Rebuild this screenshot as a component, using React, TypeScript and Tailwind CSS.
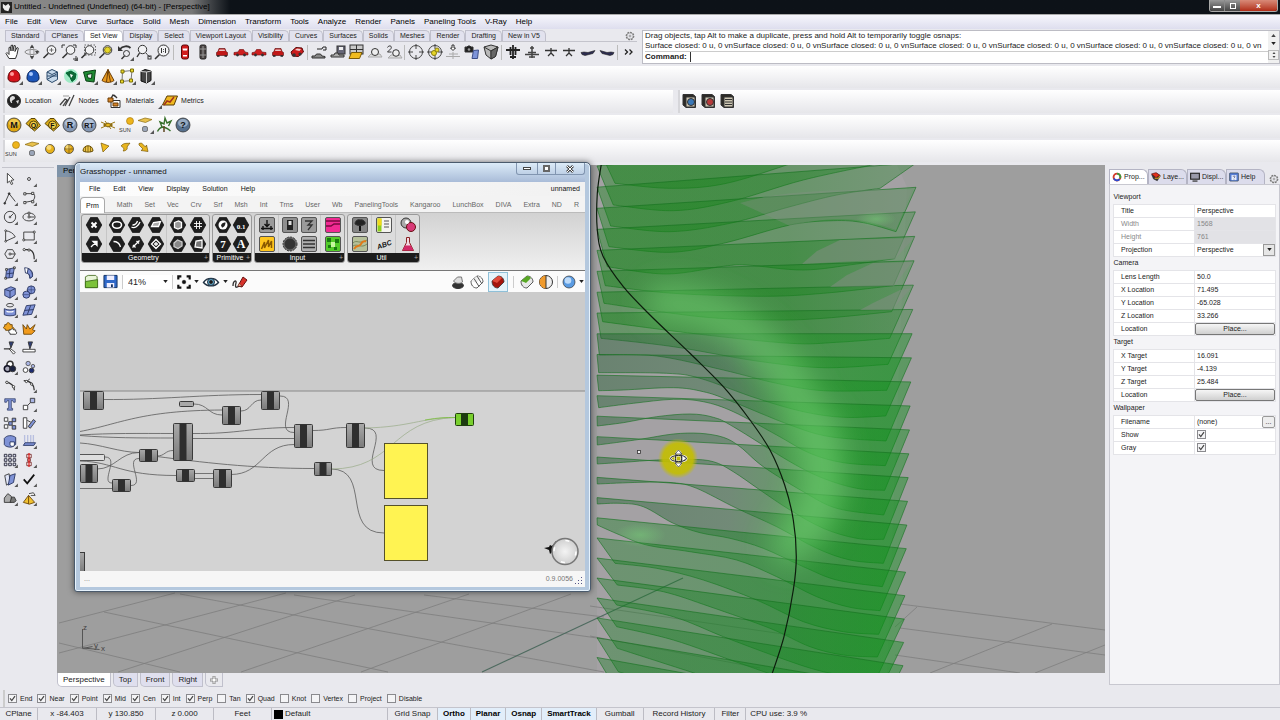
/**
 * Modelling workspace -- Rhino style shell with a floating Grasshopper window.
 *
 * The viewport and the node canvas are drawings, everything around them is plain markup.
 */

import { useState } from 'react';
import type { ReactNode } from 'react';

type Pt = [number, number];

interface Tool {
  name: string;
  art: ReactNode;
  fly?: boolean;
}

const MENUS = [
  'File', 'Edit', 'View', 'Curve', 'Surface', 'Solid', 'Mesh', 'Dimension', 'Transform', 'Tools',
  'Analyze', 'Render', 'Panels', 'Paneling Tools', 'V-Ray', 'Help',
];

const TOOL_TABS = [
  'Standard', 'CPlanes', 'Set View', 'Display', 'Select', 'Viewport Layout', 'Visibility', 'Curves',
  'Surfaces', 'Solids', 'Meshes', 'Render', 'Drafting', 'New in V5',
];

const GH_TABS = [
  'Prm', 'Math', 'Set', 'Vec', 'Crv', 'Srf', 'Msh', 'Int', 'Trns', 'User', 'Wb', 'PanelingTools',
  'Kangaroo', 'LunchBox', 'DIVA', 'Extra', 'ND', 'R',
];

/* ---------- small shared pieces ---------- */

function Art({ children, fly, className = 'size-4' }: { children: ReactNode; fly?: boolean; className?: string }) {
  return (
    <svg viewBox="0 0 16 16" className={`${className} block shrink-0 overflow-visible`} fill="none" stroke="#333" strokeWidth="1">
      {children}
      {fly && <path d="M13 17h4v-4z" fill="#555" stroke="none" />}
    </svg>
  );
}

function ToolButton({ tool }: { tool: Tool }) {
  return (
    <button aria-label={tool.name} className="flex size-4 shrink-0 items-center justify-center">
      <Art fly={tool.fly}>{tool.art}</Art>
    </button>
  );
}

function Gear() {
  return (
    <Art className="size-[10px]">
      <circle cx="8" cy="8" r="6" stroke="#777" strokeWidth="2" strokeDasharray="3 1.6" />
      <circle cx="8" cy="8" r="5" stroke="#888" />
      <circle cx="8" cy="8" r="1.5" stroke="#777" />
    </Art>
  );
}

function CheckBox({ id, checked }: { id: string; checked: boolean }) {
  return (
    <span className="relative block size-[9px]">
      <input
        id={id}
        type="checkbox"
        defaultChecked={checked}
        className="peer block size-[9px] appearance-none border border-[#8a8a8e] bg-[#f4f4f6]"
      />
      <svg viewBox="0 0 9 9" className="pointer-events-none absolute inset-0 hidden size-[9px] peer-checked:block">
        <path d="M2 4.4 3.8 6.6 7 2.2" fill="none" stroke="#444" strokeWidth="1.2" />
      </svg>
    </span>
  );
}

/* ---------- icon art ---------- */

const ball = (light: string, dark: string, r = 5.5) => (
  <>
    <circle cx="8" cy="8" r={r} fill={dark} stroke="#333" strokeWidth="0.7" />
    <circle cx="7" cy="6.5" r={r * 0.55} fill={light} stroke="none" opacity="0.8" />
  </>
);

const badge = (text: string, light: string, dark: string) => (
  <>
    <circle cx="8" cy="8" r="7" fill={dark} stroke="#333" strokeWidth="0.8" />
    <ellipse cx="8" cy="6" rx="5" ry="4" fill={light} stroke="none" opacity="0.7" />
    <text x="8" y="11.2" textAnchor="middle" fontSize={text.length > 1 ? 7 : 9} fontWeight="700" fill="#111" stroke="none">{text}</text>
  </>
);

const tag = (text: string) => (
  <>
    <path d="M1 6.5 6 1.5h4l5.5 7L9.500 14z" fill="#dcae18" stroke="#5a4508" />
    <circle cx="8.500" cy="8" r="4" fill="#f3cf45" stroke="#5a4508" />
    <text x="8.500" y="10.700" textAnchor="middle" fontSize="7" fontWeight="700" fill="#111" stroke="none">{text}</text>
  </>
);

const sunArt = (
  <>
    <circle cx="11" cy="4" r="3.500" fill="#eeb51c" stroke="#a07008" strokeWidth="0.6" />
    <text x="0" y="14.500" fontSize="5.500" fill="#333" stroke="none">SUN</text>
  </>
);

const planeLight = (
  <>
    <path d="M1 3.500 8 1l7 1.500L8.500 5.500z" fill="#e8c14c" stroke="#8a6a10" strokeWidth="0.7" />
    <rect x="5.500" y="9.500" width="5" height="5" rx="1.500" fill="#9aa5b8" stroke="#555" strokeWidth="0.7" />
  </>
);

const lens = <><circle cx="9.500" cy="6" r="4.300" fill="#f2f2f4" stroke="#333" /><path d="M6.400 9.200 1.500 14" stroke="#333" strokeWidth="1.600" /></>;

const carFront = (
  <>
    <path d="M4 7.500 5 4.500h6l1 3 1.500 1v3h-11v-3z" fill="#c01818" stroke="#5a0808" strokeWidth="0.6" />
    <path d="M5.500 5.500h5l.5 1.500H5z" fill="#e8c8c8" stroke="none" />
    <path d="M3 12h2.500M10.500 12H13" stroke="#222" strokeWidth="1.500" />
  </>
);

const carSide = (
  <>
    <path d="M1 11V8.500L5 8l1.500-2.500h4L12 8l3 .700V11z" fill="#d02020" stroke="#6a0a0a" strokeWidth="0.6" />
    <circle cx="4.500" cy="11" r="1.400" fill="#333" stroke="none" />
    <circle cx="11.500" cy="11" r="1.400" fill="#333" stroke="none" />
  </>
);

const target = <><circle cx="8" cy="8" r="6.500" stroke="#444" /><path d="M8 0v5M8 11v5M0 8h5M11 8h5" stroke="#444" /></>;
const planeSmall = <><path d="M2 6.500h12M8 4v5M8 9l-3 3M8 9l3 3" stroke="#333" strokeWidth="1.300" /></>;
const planeSide = <path d="M1 8.500 4 8l4 .5 7-2-2 3-8 2-3-1z" fill="#2c2c50" stroke="#222" strokeWidth="0.6" />;

const SET_VIEW: (Tool | null)[] = [
  { name: 'Pan', art: <path d="M4 14.500 1 9.500l1-1 2 2V3.500l1.400-.5.600 4V1.500L7.500 1 8 7l1-5.500 1.400.3L10 7.500l2-4 1.300.7L12 10.500l-1.500 4z" fill="#fff" stroke="#333" /> },
  { name: 'Rotate', art: <><ellipse cx="8" cy="8" rx="7" ry="2.500" stroke="#888" /><ellipse cx="8" cy="8" rx="2" ry="6.500" stroke="#999" /><path d="m6 12 2 3.500 2-3.500zM6 4l2-3.500L10 4zM11 7h4l-2 3z" fill="#444" stroke="none" /></> },
  { name: 'Zoom', art: <>{lens}<path d="M7.500 6h4M9.500 4v4" stroke="#555" strokeWidth="0.8" /></> },
  { name: 'Zoom Extents', art: <>{lens}<path d="M1 4V1h3M12 1h3v3M15 12v3h-3" /></>, fly: true },
  { name: 'Zoom Window', art: <>{lens}<rect x="4.500" y="1" width="11" height="10" stroke="#666" strokeDasharray="1.500 1.500" /></> },
  { name: 'Zoom Selected', art: <>{lens}<circle cx="9.500" cy="6" r="3" fill="#e6d628" stroke="#8a7e10" /></> },
  { name: 'Undo View', art: <><path d="M2.500 5.500C6 1.500 11 1.500 13.500 4" strokeWidth="1.800" /><path d="M1 2v5h5z" fill="#333" stroke="none" /><circle cx="9.500" cy="9.500" r="3" /><path d="m7.500 12-3 3" strokeWidth="1.400" /></>, fly: true },
  { name: 'Zoom Dynamic', art: <><circle cx="6.500" cy="5.500" r="4.200" fill="#f2f2f4" /><path d="M3.500 9 1 13" strokeWidth="1.400" /><path d="M10 9c1 2 2 2 4 4" /><rect x="12" y="12" width="3" height="3" /></> },
  { name: 'Zoom 1:1', art: <><circle cx="9.500" cy="6.500" r="5.500" fill="#f2f2f4" /><path d="M5.500 10.500 1 15" strokeWidth="1.600" /><path d="M7.500 4v5M11.500 4v5M9.500 5.200v.8M9.500 7.200V8" /></> },
  null,
  { name: 'Top', art: <><rect x="4.500" y="1" width="7" height="14" rx="2" fill="#d11c1c" stroke="#5a0808" /><path d="M5.500 4.500h5l-.5 2H6zM6 11h4v1.500H6z" fill="#fff" stroke="none" /></> },
  { name: 'Bottom', art: <><rect x="5" y="1" width="6" height="14" rx="1.500" fill="#4a4444" stroke="#222" /><path d="M8 2v12M5 5h6M5 11h6" stroke="#999" /></> },
  { name: 'Front', art: carFront },
  { name: 'Left', art: carSide },
  { name: 'Right', art: <g transform="matrix(-1 0 0 1 16 0)">{carSide}</g> },
  { name: 'Back', art: carFront },
  { name: 'Perspective', art: <><path d="m2 8 5-4.500 6 .5 1.500 4-5 4.500-6-.5z" fill="#cc1c1c" stroke="#5a0808" /><path d="m6 6 2-1.500 4 .5-1.500 2z" fill="#f0d0d0" stroke="none" /><circle cx="5" cy="11" r="1.800" fill="#333" stroke="none" /><circle cx="11" cy="10" r="1.600" fill="#333" stroke="none" /></> },
  null,
  { name: 'Walk', art: <><path d="M1 14v-2h3l1.500-2h4l1.500 2 3 .5V14z" fill="#888" /><path d="M6 5h5l1-2h3v3h-3" stroke="#222" /></> },
  { name: 'Named Views', art: <><rect x="7" y="2" width="8" height="8" fill="#667" /><path d="M9 3h4v3H9z" fill="#eee" stroke="none" /><path d="M1 13v-2h3l1-2h3l1 2h5v2z" fill="#aaa" /></> },
  { name: 'Viewports', art: <><rect x="2" y="1" width="13" height="9" fill="#c9c9c9" /><path d="M8.500 1v9M2 5.500h13" /><path d="m1 14.500 2.500-6H14l-2.500 6z" fill="#f0bb20" stroke="#7a5a08" /></> },
  { name: 'Camera', art: <><path d="M1 13 4 10h9l2 3z" fill="#ddd" stroke="#aaa" /><circle cx="8" cy="8" r="3.500" fill="#eee" /></> },
  { name: 'Two Point', art: <><path d="M2 14 5 11h9l2 3z" fill="#ddd" stroke="#aaa" /><circle cx="10" cy="9" r="3.300" fill="#eee" /><path d="M1.500 3.500c1-2.500 5-2 3.500 1L1.500 8h4" /></> },
  null,
  { name: 'Target', art: target },
  { name: 'Target Object', art: <>{target}<circle cx="7" cy="9" r="2.500" fill="#e6d628" stroke="#8a7e10" /><circle cx="10" cy="6" r="2" fill="#e6d628" stroke="#8a7e10" /></> },
  { name: 'Drop Target', art: <><path d="M7 1h2v3h1.500L8 6.500 5.500 4H7z" fill="#fff" /><path d="M1 12.500h14M4 10h9M8 8v7" stroke="#aaa" /></> },
  { name: 'Snapshot', art: <><path d="M1 3h2l1-1h2l1 1h2v5H1z" fill="#222" /><circle cx="5" cy="5.500" r="1.300" fill="#999" stroke="none" /><path d="m8 14.500 1.500-8 5-.5-1 8.500z" fill="#7d93d8" stroke="#3b4d88" /></> },
  { name: 'Box', art: <><path d="M1 3 8 1l7 2-2.500 9.500L8 15l-5-4z" fill="#b9b9b9" stroke="#333" /><path d="m1 3 7 4 7-4M8 7v8" /><path d="m8 7 7-4-2.500 9.500L8 15z" fill="#666" /></> },
  null,
  { name: 'Plane Top', art: <><path d="M8 1v14M1 6h14M5.500 3v8M10.500 3v8M5 13h6" stroke="#222" strokeWidth="1.800" /></> },
  { name: 'Plane Bottom', art: <><path d="M1 10.500h14M8 2v12M4 8.500h8M6 4h4M5 13h6" stroke="#444" strokeWidth="1.500" /></> },
  { name: 'Plane Front', art: planeSmall },
  { name: 'Plane Back', art: planeSmall },
  { name: 'Plane Left', art: planeSide },
  { name: 'Plane Right', art: <g transform="matrix(-1 0 0 1 16 0)">{planeSide}</g> },
  null,
  { name: 'More', art: <path d="m4 5.500 2.500 2.500L4 10.500M8.500 5.500 11 8l-2.500 2.500" stroke="#222" strokeWidth="1.300" /> },
];

const SHAPES: Tool[] = [
  { name: 'Red Solid', art: <><path d="M2 10C2 5 5 2 8 2s6 3 6 8c0 3-3 4-6 4s-6-1-6-4z" fill="#d3141c" stroke="#5c0606" /><circle cx="6" cy="6" r="2" fill="#ff9a9a" stroke="none" /></>, fly: true },
  { name: 'Blue Solid', art: <><path d="M2 10C2 5 5 2 8 2s6 3 6 8c0 3-3 4-6 4s-6-1-6-4z" fill="#1c55b8" stroke="#0a2358" /><circle cx="6" cy="6" r="2" fill="#a8c8ff" stroke="none" /></>, fly: true },
  { name: 'Cage', art: <><path d="m3 4 5-2.500L13.500 4v7.500L8 14.500l-5-3z" fill="#c6d8ea" stroke="#2c4b6c" /><path d="m3 11.500 10.500-6M3 8h10.500M3 4l5 2.500L13.500 4" stroke="#2c4b6c" /></>, fly: true },
  { name: 'Glow', art: <><circle cx="8" cy="8" r="7" fill="#7fe8b4" stroke="none" opacity="0.7" /><path d="m3 5 5-2 5 3-1 5-3 2.500-2-4z" fill="#0f6a36" stroke="#063" /><path d="m7 6 3 1-2 3z" fill="#fff" stroke="none" /></>, fly: true },
  { name: 'Frame', art: <><path d="m2.500 4 12-2-1.500 12-8-1z" fill="#1f8a34" stroke="#0a4015" /><path d="m6 6.500 5-1-.5 5-3.500-.5z" fill="#e9e9ec" stroke="#0a4015" /></>, fly: true },
  { name: 'Cone', art: <><path d="m8 1.500 6 11c-3 2.500-9 2.500-12 0z" fill="#e79a20" stroke="#6a3c05" /><path d="M8 1.500 6.500 14M8 1.500 10.500 14" stroke="#6a3c05" /></>, fly: true },
  { name: 'Points', art: <><path d="M3.500 3.500 13 2.500l-1 10-9 1z" stroke="#777" /><path d="M2 2h3v3H2zM11.500 1h3v3h-3zM10.500 11h3v3h-3zM1.500 12h3v3h-3z" fill="#ecd92c" stroke="#7d7008" /></>, fly: true },
  { name: 'Box Split', art: <><path d="m3 3.500 4-2 6 1.500v9.500l-4.500 2.500-5.500-2z" fill="#444" stroke="#111" /><path d="M8.500 4v11M3 3.500 8.500 4 13 3" stroke="#ccc" /></>, fly: true },
];

const VRAY: Tool[] = [
  { name: 'Material Editor', art: badge('M', '#f6d867', '#dda512') },
  { name: 'Options', art: tag('O') },
  { name: 'Frame Buffer', art: tag('F') },
  { name: 'Render', art: badge('R', '#c6d4e8', '#8497b4') },
  { name: 'Render RT', art: badge('RT', '#c6d4e8', '#8497b4') },
  { name: 'Net', art: <><path d="m1 5 14 6M1 11l14-6M3 8h10M5 4l6 8" stroke="#9b7812" /><path d="m4 8 4-2 4 2-4 2z" fill="#e6b822" stroke="#7a5a08" /></> },
  { name: 'Sun', art: sunArt },
  { name: 'Plane Light', art: planeLight, fly: true },
  { name: 'Proxy', art: <><path d="M1.500 14.500C4 9 9 9 14.500 14M6 10 4 5l4 2 1-6 2 5 4-2-2.500 5" stroke="#38702c" strokeWidth="1.400" /><path d="M8 9v6" stroke="#5c4420" strokeWidth="1.500" /></> },
  { name: 'Help', art: badge('?', '#b4c4d8', '#56708e') },
];

const LIGHTS: Tool[] = [
  { name: 'Sun Light', art: sunArt },
  { name: 'Rectangular Light', art: planeLight },
  { name: 'Omni Light', art: ball('#fbe48c', '#e8b21a', 4.5) },
  { name: 'Sphere Light', art: <>{ball('#fbe48c', '#e0a818', 4.5)}<path d="M4 8h8M8 4v8" stroke="#7a5a08" strokeWidth="0.7" /></> },
  { name: 'Dome Light', art: <><path d="M3 10c0-7 10-7 10 0-2 1.500-8 1.500-10 0z" fill="#ecc448" stroke="#6a5008" /><path d="M8 5v6M5.500 6v5M10.500 6v5" stroke="#6a5008" strokeWidth="0.7" /></> },
  { name: 'Spot Light', art: <path d="m2 2 8 3-6 6z" fill="#eebb20" stroke="#7a5a08" strokeWidth="0.7" /> },
  { name: 'IES Light', art: <><path d="M4 5c3-4 7-2 9-3l-3 4c1 2-1 4-4 4 2-2 0-4-2-5z" fill="#e8b520" stroke="#7a5a08" strokeWidth="0.7" /></> },
  { name: 'Direct Light', art: <path d="M3 2.500 5.500 2l4 4 1-2 1.500 6.500-7-1 2-1.500-4-4z" fill="#e8b520" stroke="#7a5a08" strokeWidth="0.7" /> },
];

const blue = '#7f92d6';
const cubeArt = <><path d="m2 5 7-3 5 2v7l-6 4-6-3z" fill={blue} stroke="#27345f" /><path d="m2 5 6 2 6-3M8 7v8" stroke="#27345f" /></>;

const PALETTE: Tool[] = [
  { name: 'Select', art: <path d="M5 1.500v11l2.500-2.200 2 4 1.700-.8-2-4L12.500 9z" fill="#fff" /> },
  { name: 'Point', art: <circle cx="8" cy="8" r="1.700" />, fly: true },
  { name: 'Polyline', art: <><path d="M2 14 7 3l7 9" /><circle cx="2" cy="14" r="1" fill="#333" /><circle cx="7" cy="3" r="1" fill="#333" /></>, fly: true },
  { name: 'Curve', art: <><path d="M3 3h9c4 0 3 8-1 8.500L3 13" /><path d="M2 2h2.500v2.500H2zM11 1.500h2.500V4H11zM2 12h2.500v2.500H2zM11 11h2.500v2.500H11z" fill="#fff" /></>, fly: true },
  { name: 'Circle', art: <><circle cx="8" cy="8" r="6.500" /><path d="m8 8 4-4" /><circle cx="8" cy="8" r="1" fill="#fff" /></>, fly: true },
  { name: 'Ellipse', art: <><ellipse cx="8" cy="8" rx="7" ry="4.500" /><path d="M8 8V3.500M8 8h6" /><circle cx="8" cy="8" r="1.200" fill="#fff" /><circle cx="8" cy="3.500" r="1.200" fill="#fff" /></>, fly: true },
  { name: 'Arc', art: <><path d="M3 2v12l11-5C12 5 8 2.500 3 2z" /><circle cx="3" cy="2" r="1" fill="#fff" /><circle cx="3" cy="14" r="1" fill="#fff" /></>, fly: true },
  { name: 'Rectangle', art: <><path d="M2 3.500h12v9H2z" /><circle cx="2" cy="12.500" r="1.200" fill="#fff" /><circle cx="14" cy="3.500" r="1.200" fill="#fff" /></>, fly: true },
  { name: 'Polygon', art: <><path d="m5 3 6 0 3 5-3 5H5L2 8z" /><path d="M8 8h6" /><circle cx="8" cy="8" r="1.200" fill="#fff" /></>, fly: true },
  { name: 'Fillet', art: <><path d="M2 3h5c5 0 7 4 7 11" strokeWidth="1.400" /><circle cx="2.500" cy="3" r="1.300" fill="#fff" /><circle cx="8" cy="3.500" r="1.300" fill="#fff" /></>, fly: true },
  { name: 'Surface', art: <><path d="m4 4 9-2-2 11-8 1z" fill={blue} stroke="#27345f" /><path d="M3 3h2v2H3zM12 1h2v2h-2zM2 13h2v2H2z" fill="#fff" /><path d="M8 3 7 13.500M4 9l8-1" stroke="#27345f" /></>, fly: true },
  { name: 'Loft', art: <><path d="M3 2c6 0 10 4 9 10l-3 2c0-4-2-6-5-6z" fill="#fff" stroke="#27345f" /><path d="M7 3c4 2 5 5 5 9l-3 2c0-4-1-5-3-6z" fill={blue} stroke="#27345f" /></>, fly: true },
  { name: 'Box', art: cubeArt, fly: true },
  { name: 'Spheres', art: <><circle cx="10.500" cy="5.500" r="4.500" fill={blue} stroke="#27345f" /><circle cx="5" cy="11" r="4" fill={blue} stroke="#27345f" /><path d="M6 5.500h9M1 11h8M10.500 1v9" stroke="#27345f" strokeWidth="0.6" /></>, fly: true },
  { name: 'Pipe', art: <><ellipse cx="8" cy="2.500" rx="4" ry="2" /><path d="M1.500 6.500c4 2 9 2 13 0v7c-4 1.500-9 1.500-13 0z" fill={blue} stroke="#27345f" /><path d="M4 9.500c3 1 5 1 8 0" stroke="#fff" strokeWidth="1.500" /></>, fly: true },
  { name: 'Patch', art: <><path d="m5 3 10-1-4 11-10 1z" fill={blue} stroke="#27345f" /><path d="m10 2.500-4 11M3 8.500l10-1" stroke="#27345f" /></>, fly: true },
  { name: 'Join', art: <><path d="M2 3h2c0-3 4-3 4 0h2.500v3c3 0 3 3.500 0 3.500H3V8C0 8 0 5 2 5z" fill="#f0a422" stroke="#6a4508" /><path d="M7 9h2c0-2 3-2 3 0h2.500v2c2 0 1 3 0 3H8v-1.500c-2 0-2-2-1-2z" fill="#fff" /></> },
  { name: 'Explode', art: <path d="M2 14 1 3l4 5 1-5 3 5 6-5-3 6 3 1-4 4z" fill="#f19a1c" stroke="#6a4508" /> },
  { name: 'Trim', art: <><path d="M1 9h8" strokeWidth="1.400" /><path d="M7 1h5L9 8z" fill="#2f3f78" /><path d="m9 9 5 4-2 2-5-6z" fill="#fff" /></> },
  { name: 'Split', art: <><path d="M1 9.500h14v3H1z" fill="#fff" /><path d="M7 1h5L9 9z" fill="#2f3f78" /></> },
  { name: 'Group', art: <><circle cx="8" cy="5" r="3.500" fill="#fff" strokeWidth="1.800" /><circle cx="5" cy="10" r="3.500" fill="#aab" stroke="#112" strokeWidth="1.800" /><circle cx="11" cy="10" r="3.500" fill="#1c2340" /></>, fly: true },
  { name: 'Ungroup', art: <><circle cx="7" cy="4" r="2.500" fill="#a9b4e4" stroke="#555" /><circle cx="12.500" cy="7" r="2" fill="#a9b4e4" stroke="#555" /><circle cx="4" cy="11.500" r="2.700" fill="#fff" /><circle cx="11" cy="12" r="2.700" fill="#1c2a70" /></> },
  { name: 'Edit Points', art: <><path d="M3 5c6 0 10 4 10 9" strokeWidth="1.500" /><circle cx="4.500" cy="5" r="1.400" fill="#fff" /><circle cx="12" cy="10" r="1.400" fill="#fff" /></> },
  { name: 'Extend', art: <><path d="M2 3c8 0 12 5 12 11" strokeWidth="1.500" /><path d="m5 4 4-3" /><circle cx="5" cy="4" r="1.300" fill="#fff" /><circle cx="11" cy="7" r="1.300" fill="#fff" /></>, fly: true },
  { name: 'Text', art: <path d="M2 2h12v4h-2l-1-2H9.500v9H11v2H5v-2h1.500V4H5L4 6H2z" fill={blue} stroke="#27345f" strokeWidth="0.8" /> },
  { name: 'Move', art: <><path d="M1.500 9.500h5v5h-5z" fill="#fff" /><path d="M9.500 1.500h5v5h-5z" fill="#a9b4e4" /><path d="m6.500 9.500 3-3" /></>, fly: true },
  { name: 'Array', art: <><path d="M1.500 2h4v4h-4zM1.500 10h4v4h-4z" fill="#fff" /><path d="M6.500 6.500h4v4h-4zM10.500 2.500h4v4h-4zM10.500 11h4v4h-4z" fill={blue} /></> },
  { name: 'Orient', art: <><path d="M1.500 2h4v12h-4z" fill="#fff" /><path d="m7 12 6-8 2.500 2-6 8z" fill={blue} /><path d="m6 5 4 2" /></> },
  { name: 'Solid Edit', art: <><path d="M1.500 5c3-4 9-4 13-1v8c-2 2-4 3-6 3-4 0-7-2-7-3z" fill={blue} stroke="#27345f" /><path d="M8 9h5v4c-2 2-5 1-5-1z" fill="#fff" stroke="#27345f" /></>, fly: true },
  { name: 'Project', art: <><path d="M3 1v9M6.500 1v9M10 1v9M13 1v9" stroke="#b8bfe0" strokeWidth="1.500" /><path d="m1.500 13 2-3h12l-2 3z" fill={blue} stroke="#27345f" /></>, fly: true },
  { name: 'Grid', art: <path d="M1.500 1.500h3v3h-3zM6.500 1.500h3v3h-3zM11.500 1.500h3v3h-3zM1.500 6.500h3v3h-3zM6.500 6.500h3v3h-3zM11.500 6.500h3v3h-3zM1.500 11.500h3v3h-3zM6.500 11.500h3v3h-3zM11.500 11.500h3v3h-3z" fill="#dfe2f2" stroke="#223" />, fly: true },
  { name: 'Align', art: <><path d="M5.500 1.500h5v4h-5zM6.500 6.500h3v3h-3zM5.500 10.500h5v4h-5z" fill="#fff" stroke="#722" /><path d="M8 0v16" stroke="#d22" strokeWidth="1.500" /></>, fly: true },
  { name: 'Analyze', art: <><path d="m2 4 5-2 1 10-4 3z" fill="#dfe4f8" /><path d="m8 4 6-2-2 10-6 3z" fill={blue} stroke="#27345f" /></>, fly: true },
  { name: 'Check', art: <path d="m2 8.500 4 4.500L14 3" stroke="#111" strokeWidth="2" />, fly: true },
  { name: 'Render', art: <><path d="M1.500 13V8l4-5 4 3v7z" fill="#aaa" /><path d="m8 13 2-6h3l2 4-2 2z" fill="#777" /></>, fly: true },
  { name: 'Spotlight', art: <><path d="m1.500 13 6-8 7 8-6 2z" fill="#f0c030" stroke="#6a4508" /><path d="M7.500 5v10" stroke="#6a4508" /><path d="m8 3 5-1 2 3h-5" fill="#fff" /></>, fly: true },
];

/* ---------- viewport drawing ---------- */

// smooth line through a list of points
function spline(pts: Pt[]) {
  let d = '';
  for (let i = 0; i < pts.length - 1; i++) {
    const p0 = pts[i - 1] ?? pts[i];
    const p1 = pts[i];
    const p2 = pts[i + 1];
    const p3 = pts[i + 2] ?? p2;
    const c1 = [p1[0] + (p2[0] - p0[0]) / 6, p1[1] + (p2[1] - p0[1]) / 6];
    const c2 = [p2[0] - (p3[0] - p1[0]) / 6, p2[1] - (p3[1] - p1[1]) / 6];
    d += `C${c1.map((n) => n.toFixed(1))} ${c2.map((n) => n.toFixed(1))} ${p2[0].toFixed(1)},${p2[1].toFixed(1)}`;
  }
  return d;
}

// lower edge of every fin, left to right, in thirds of a unit from (590,160)
const FIN_EDGES: Pt[][] = [
  [[75, 70], [240, 85], [400, 72], [590, 15], [800, -60]],
  [[70, 135], [250, 152], [420, 125], [640, 60], [870, 10]],
  [[62, 198], [240, 215], [420, 190], [600, 140], [740, 105], [870, 85]],
  [[57, 260], [240, 277], [400, 250], [600, 195], [730, 182], [820, 188], [918, 215]],
  [[52, 320], [230, 342], [400, 319], [470, 315], [640, 330], [800, 312], [914, 296]],
  [[46, 377], [250, 400], [520, 409], [700, 400], [910, 377]],
  [[42, 430], [330, 470], [540, 480], [700, 475], [905, 455]],
  [[38, 485], [330, 523], [600, 550], [740, 547], [899, 535]],
  [[33, 535], [250, 560], [500, 603], [700, 623], [894, 613]],
  [[28, 585], [200, 588], [400, 630], [560, 670], [700, 692], [890, 691]],
  [[26, 638], [230, 640], [330, 655], [500, 715], [640, 755], [760, 772], [887, 768]],
  [[26, 692], [100, 690], [250, 683], [340, 695], [420, 722], [600, 795], [720, 830], [888, 843]],
  [[26, 743], [130, 730], [250, 718], [340, 725], [430, 755], [560, 825], [660, 880], [760, 908], [886, 917]],
  [[22, 798], [100, 788], [200, 770], [300, 762], [370, 772], [430, 800], [600, 905], [700, 955], [800, 985], [884, 991]],
  [[22, 855], [150, 838], [250, 822], [330, 820], [400, 832], [450, 860], [520, 920], [640, 995], [740, 1045], [881, 1065]],
  [[22, 912], [100, 907], [200, 900], [300, 898], [370, 905], [430, 935], [510, 990], [600, 1050], [700, 1105], [800, 1135], [881, 1138]],
  [[22, 972], [150, 967], [250, 968], [320, 985], [440, 1045], [560, 1100], [680, 1165], [780, 1200], [880, 1210]],
  [[22, 1032], [90, 1030], [160, 1040], [250, 1090], [330, 1118], [420, 1135], [520, 1165], [640, 1220], [740, 1260], [877, 1280]],
  [[22, 1095], [90, 1125], [170, 1155], [300, 1175], [440, 1200], [560, 1250], [680, 1310], [780, 1342], [870, 1352]],
  [[75, 1210], [200, 1225], [340, 1260], [500, 1320], [640, 1385], [760, 1415], [866, 1423]],
  [[82, 1275], [220, 1295], [360, 1340], [540, 1405], [660, 1460], [760, 1485], [862, 1491]],
  [[80, 1335], [250, 1370], [400, 1430], [560, 1490], [700, 1535], [857, 1560]],
  [[80, 1400], [250, 1440], [450, 1510], [600, 1560], [853, 1628]],
  [[82, 1465], [300, 1535], [500, 1600], [850, 1696]],
  [[85, 1535], [300, 1600], [850, 1760]],
  [[85, 1600], [300, 1680], [850, 1830]],
];

const toView = ([x, y]: Pt): Pt => [590 + x / 3, 160 + y / 3];

const FINS = FIN_EDGES.map((edge, i) => {
  const k = i - 3;
  const left: Pt = [597, 208.3 + 21.1 * k - 0.031 * k * k];
  const right: Pt = [916 - 0.65 * k, 187.3 + 24.6 * k - 0.034 * k * k];
  const low = edge.map(toView).reverse();
  return `M${left}L${right}L${low[0]}${spline(low)}Z`;
});

const RAIL: Pt[] = [
  [36, 0], [22, 100], [22, 210], [40, 290], [100, 380], [180, 465], [300, 580], [400, 680], [480, 780],
  [540, 870], [584, 975], [610, 1080], [619, 1190], [610, 1290], [582, 1430], [545, 1545],
];

const FLOOR = [
  'M59 623 175 593', 'M59 653 286 593', 'M118 672 355 595', 'M241 672 469 594', 'M361 672 571 594',
  'M59 643 180 672', 'M104 612 388 672', 'M180 594 604 672', 'M294 595 604 639', 'M424 595 604 617',
  'M900 604 1105 630', 'M900 628 1105 655', 'M895 655 1020 673', 'M895 627 917 607', 'M930 673 1052 624', 'M1035 673 1105 645',
  'M590 606 790 635', 'M590 636 760 668',
];

function Scene() {
  return (
    <svg viewBox="57 165 1048 508" preserveAspectRatio="xMinYMin slice" className="absolute inset-0 h-full w-full">
      <defs>
        <linearGradient id="finTop" gradientUnits="userSpaceOnUse" x1="597" y1="0" x2="916" y2="0">
          <stop offset="0" stopColor="#168319" stopOpacity="0.42" />
          <stop offset="0.6" stopColor="#16831a" stopOpacity="0.42" />
          <stop offset="1" stopColor="#23862a" stopOpacity="0.34" />
        </linearGradient>
        <linearGradient id="finMid" gradientUnits="userSpaceOnUse" x1="597" y1="0" x2="910" y2="0">
          <stop offset="0" stopColor="#265f34" stopOpacity="0.46" />
          <stop offset="0.42" stopColor="#2c6a3a" stopOpacity="0.42" />
          <stop offset="0.62" stopColor="#18901f" stopOpacity="0.42" />
          <stop offset="1" stopColor="#0b9018" stopOpacity="0.44" />
        </linearGradient>
        <linearGradient id="finLow" gradientUnits="userSpaceOnUse" x1="597" y1="0" x2="910" y2="0">
          <stop offset="0" stopColor="#1c7e26" stopOpacity="0.4" />
          <stop offset="0.5" stopColor="#148420" stopOpacity="0.4" />
          <stop offset="1" stopColor="#0a9216" stopOpacity="0.44" />
        </linearGradient>
        <radialGradient id="shine">
          <stop offset="0" stopColor="#7ce07c" stopOpacity="0.4" />
          <stop offset="1" stopColor="#7ce07c" stopOpacity="0" />
        </radialGradient>
        <filter id="soften" filterUnits="userSpaceOnUse" x="540" y="165" width="440" height="508">
          <feGaussianBlur stdDeviation="14" />
        </filter>
        <radialGradient id="cursorGlow">
          <stop offset="0.75" stopColor="#c4be00" stopOpacity="0.9" />
          <stop offset="1" stopColor="#c4be00" stopOpacity="0" />
        </radialGradient>
        <clipPath id="finClip">
          {FINS.map((d, i) => <path key={i} d={d} />)}
        </clipPath>
      </defs>

      <rect x="57" y="165" width="1048" height="508" fill="#9e9e9e" />
      <path d="M597 165h300l10 22-6 130-6 150-8 206H597z" fill="#a4a1a4" />
      {FLOOR.map((d) => <path key={d} d={d} stroke="#7d7d7d" strokeWidth="0.8" />)}
      <path d="M482 672 683 578" stroke="#4f6b60" strokeWidth="1.200" />

      {FINS.map((d, i) => (
        <path key={i} d={d} fill={i < 9 ? 'url(#finTop)' : i < 18 ? 'url(#finMid)' : 'url(#finLow)'} stroke="#14701f" strokeOpacity="0.75" strokeWidth="0.8" />
      ))}

      {/* back faces that catch no light */}
      <g fill="#868e86" fillOpacity="0.5">
        <path d="M840 240 914 238 895 259 802 264 817 251z" />
        <path d="M873 263 912 262 894 286 830 287 847 275z" />
        <path d="M900 290 911 288 892 310 860 310 873 303z" />
        <path d="M740 203C790 188 850 190 912 190L896 230C860 216 830 216 790 226z" fillOpacity="0.35" />
      </g>

      <g clipPath="url(#finClip)">
        <g filter="url(#soften)" fill="none" stroke="#74d874" strokeLinecap="round">
          <path d="M665 303C700 304 735 320 765 350S805 410 815 450 815 510 790 545" strokeWidth="40" strokeOpacity="0.5" />
          <path d="M825 420C835 460 835 500 815 530" strokeWidth="30" strokeOpacity="0.3" />
        </g>
        <ellipse cx="876" cy="219" rx="20" ry="8" fill="url(#shine)" />
        <ellipse cx="640" cy="535" rx="26" ry="12" fill="url(#shine)" />
      </g>

      <path d={`M602 160${spline(RAIL.map(toView))}`} fill="none" stroke="#0c1c0c" strokeWidth="1.200" />

      <rect x="637.500" y="450.500" width="3" height="3" fill="#eee" stroke="#333" strokeWidth="0.8" />
      <circle cx="678" cy="458.500" r="20" fill="url(#cursorGlow)" />
      <g fill="none" stroke="#222" strokeWidth="1">
        <ellipse cx="678.500" cy="458.500" rx="8" ry="3" stroke="#fff" strokeWidth="2" />
        <ellipse cx="678.500" cy="458.500" rx="3" ry="7.500" stroke="#fff" strokeWidth="2" />
        <ellipse cx="678.500" cy="458.500" rx="8" ry="3" />
        <ellipse cx="678.500" cy="458.500" rx="3" ry="7.500" />
        <path d="m675 463 3.500 4 3.500-4zM682 455l4.500 3.500-4.500 3zM675 454l3.500-4 3.500 4z" fill="#fff" strokeWidth="0.6" />
      </g>

      {/* world axes */}
      <g fill="none" stroke="#555" strokeWidth="1">
        <path d="M82.500 629v19l17 1.500M82.500 648.500l10-2" />
      </g>
      <g fontSize="8" fill="#444">
        <text x="83" y="630">z</text>
        <text x="94" y="648">y</text>
        <text x="101" y="651">x</text>
      </g>
    </svg>
  );
}

/* ---------- Grasshopper ---------- */

const NODES = [
  [83, 391, 20, 18], [222, 406, 18, 18], [261, 391, 18, 18], [173, 423, 19, 37], [294, 424, 18, 23],
  [139, 449, 18, 12], [80, 464, 17, 18], [112, 479, 18, 12], [176, 469, 18, 12], [213, 469, 18, 18],
  [314, 462, 17, 13], [346, 423, 18, 24],
];

const WIRES = [
  'M103 399.500C160 400 200 394.500 261 394.500',
  'M194 404C208 404 208 415 222 415',
  'M80 431.500C120 424 140 410.500 222 410',
  'M241 411C251 411 251 400 261 400',
  'M280 396C302 396 272 432.500 294 432.500',
  'M80 435C110 433 140 433.500 173 433.500',
  'M80 435.500C110 438 140 438 173 438',
  'M192 433.500C240 434 250 427.500 294 427.500',
  'M192 438.500H294',
  'M80 443C100 444 120 452.500 139 452.500',
  'M97 469C115 469 120 452.500 139 452.500',
  'M105 457C120 457 100 483 112 483',
  'M131 485.500C146 485.500 124 458.500 139 458.500',
  'M157 456C165 456 165 450.500 173 450.500',
  'M157 456.500C200 462 250 468.500 314 468.500',
  'M80 461C115 462 120 475.500 176 475.500',
  'M80 488.500H112',
  'M195 473.500H213M195 478.500H213',
  'M231 474.500C262 474.500 262 444.500 294 444.500',
  'M313 430.500C330 430.500 330 427.500 346 427.500',
  'M331 469C372 469 340 533 384 533',
  'M365 428C394 428 354 470.500 384 470.500',
];

function NodeCanvas() {
  return (
    <svg viewBox="80 292 505 279" preserveAspectRatio="xMinYMin slice" className="block min-h-0 w-full flex-1">
      <defs>
        <linearGradient id="node" x1="0" y1="0" x2="0" y2="1">
          <stop offset="0" stopColor="#a9a9a9" />
          <stop offset="1" stopColor="#7b7b7b" />
        </linearGradient>
        <radialGradient id="dial">
          <stop offset="0" stopColor="#f4f4f4" />
          <stop offset="1" stopColor="#cfcfcf" />
        </radialGradient>
      </defs>
      <rect x="80" y="292" width="505" height="279" fill="#d3d3d3" />
      <rect x="80" y="292" width="505" height="99" fill="#cbcbcb" />
      <path d="M80 391H585" stroke="#8a8a8a" strokeWidth="1.200" />
      <g fill="none" stroke="#5b5b5b" strokeWidth="0.8">
        {WIRES.map((d) => <path key={d} d={d} />)}
        <path d="M365 428C410 427 420 418 455 417.500M331 469C395 469 390 420 455 417.500" stroke="#9fb090" />
        <path d="M425 420C440 417.500 445 417.500 455 417.500" stroke="#7bbf3c" />
      </g>
      {NODES.map(([x, y, w, h]) => (
        <g key={`${x}-${y}`}>
          <rect x={x + 0.5} y={y + 0.5} width={w} height={h} rx="1" fill="url(#node)" stroke="#3a3a3a" />
          <rect x={x + w / 2 - 3} y={y + 0.5} width="7" height={h} fill="#2e2e2e" />
        </g>
      ))}
      <rect x="179.500" y="401.500" width="14" height="5" rx="1" fill="#a8a8a8" stroke="#3a3a3a" />
      <rect x="78" y="454.500" width="26.500" height="6" rx="1" fill="#dedede" stroke="#555" />
      <rect x="78" y="552.500" width="6.500" height="20" fill="url(#node)" stroke="#3a3a3a" />
      <rect x="455.500" y="413.500" width="18" height="12" rx="1" fill="#79cf2e" stroke="#20400c" />
      <rect x="461" y="413.500" width="7" height="12" fill="#1c3a10" />
      <g fill="#fff352" stroke="#55512a">
        <rect x="384.500" y="443.500" width="43" height="55" />
        <rect x="384.500" y="505.500" width="43" height="55" />
      </g>
      <path d="m544 548 5-1 1-2 2 1 4-5 2 1-1 3 3 1-4 6-3-1-3 3-1-4z" fill="#111" />
      <circle cx="565" cy="551.500" r="13" fill="url(#dial)" stroke="#777" strokeWidth="1.500" />
      <circle cx="565" cy="551.500" r="11" fill="none" stroke="#fff" strokeWidth="1.500" strokeDasharray="4 13.300" />
    </svg>
  );
}

const hex = (glyph: ReactNode) => (
  <>
    <path d="M4.500.500h7L15.800 8l-4.300 7.500h-7L.200 8z" fill="#1e1e1e" stroke="#000" strokeWidth="0.6" />
    <g stroke="#fff" strokeWidth="1.300">{glyph}</g>
  </>
);

const tile = (fill: string, glyph: ReactNode) => (
  <>
    <rect x="0.500" y="0.500" width="15" height="15" rx="1.500" fill={fill} stroke="#555" />
    {glyph}
  </>
);

const glyphText = (t: string, size = 10) => (
  <text x="8" y="11.500" textAnchor="middle" fontSize={size} fontWeight="700" fontFamily="Liberation Serif, serif" fill="#fff" stroke="none">{t}</text>
);

interface Panel {
  title: string;
  width: string;
  groups: ReactNode[][];
}

// each group fills column by column, two icons per column
const PANELS: Panel[] = [
  {
    title: 'Geometry',
    width: 'w-[129px]',
    groups: [
      [hex(<path d="m5.500 5.500 5 5M10.500 5.500l-5 5" strokeWidth="2" />), hex(<path d="m5 11 5-5M7 5.500h4v4z" fill="#fff" />)],
      [
        hex(<ellipse cx="8" cy="8" rx="4.500" ry="3.200" strokeWidth="1.600" />), hex(<path d="M4.500 5.500c4 0 6 2 7 5.500" />),
        hex(<path d="M3.500 10c3 2 7-1 8.500-5M4.500 8c2 0 4-1 5-4" />), hex(<path d="m4.500 11.500 2-2 3-3 2-2M5 9l2.500 2.500M8.500 5 11 7.500" />),
        hex(<path d="m3.500 9.500 2-4 7-1-2 5z" fill="#aaa" />), hex(<path d="m8 3.500 4.500 4.500L8 12.500 3.500 8zM6 8h4M8 6v4" />),
      ],
      [
        hex(<path d="m4.500 5.500 4-1.500 3 1.500v5L8 12l-3.500-1.500z" fill="#999" />), hex(<path d="m4 7 3.500-3L12 6v4l-4 2.500-4-2z" fill="#888" stroke="#ccc" />),
        hex(<path d="M4 6.500h8M4 9.500h8M6.500 4v8M9.500 4v8" strokeWidth="0.9" />), hex(<path d="m5 11 1-6 6-1v8z" fill="#777" />),
      ],
    ],
  },
  {
    title: 'Primitive',
    width: 'w-[40px]',
    groups: [[
      hex(<><circle cx="8" cy="8" r="4.500" fill="#fff" stroke="none" /><path d="M6 8.500c1-3 3-3 4.500-3C10.500 8 9 10.500 7 10.500z" fill="#222" stroke="none" /></>),
      hex(glyphText('7', 11)),
      hex(glyphText('0.1', 7)),
      hex(glyphText('A', 12)),
    ]],
  },
  {
    title: 'Input',
    width: 'w-[91px]',
    groups: [
      [tile('#9a9a9a', <path d="M2 11.500h12M8 3v6M5.500 7 8 9.500 10.500 7M4 9v4M12 9v4" stroke="#111" strokeWidth="1.400" />), tile('#ffc61e', <path d="m2.500 13 3-7v6l4-8v7l3-6v7" stroke="#8a5a00" strokeWidth="1.500" />)],
      [
        tile('#8f8f8f', <><rect x="5" y="3" width="6" height="10" fill="#222" stroke="none" /><path d="M6.500 4h3v4h-3z" fill="#ddd" stroke="none" /></>), <><circle cx="8" cy="8" r="7" fill="#6a6a6a" stroke="#333" strokeDasharray="2 1" /><circle cx="8" cy="8" r="5" fill="#333" /></>,
        tile('#9a9a9a', <path d="M4 4h7L7 8h4l-4 5" stroke="#333" strokeWidth="1.300" />), tile('#b0b0b0', <path d="M2 4.500h12M2 8h12M2 11.500h12" stroke="#333" strokeWidth="1.500" />),
      ],
      [
        tile('#f02a92', <path d="M1 9h5l3-2h6M1 4h14" stroke="#7a0a40" strokeWidth="1.500" />),
        tile('#53cc2a', <><path d="M2 2h4v4H2zM10 3h4v4h-4zM3 9h3v3H3zM9 11h3v3H9z" fill="#187a10" stroke="none" /><path d="M6 6h4v5H6z" fill="#c6f7a0" stroke="none" /></>),
      ],
    ],
  },
  {
    title: 'Util',
    width: 'w-[73px]',
    groups: [
      [
        tile('#868686', <><path d="M8 14V8" stroke="#111" strokeWidth="2" /><path d="M3 7c0-4 4-5 5-4 3-1 6 2 5 4-2 2-8 2-10 0z" fill="#222" /></>),
        tile('#b6c09a', <><path d="M1 7c4-4 6 2 14-3M1 10c5-3 8 3 14-2" stroke="#7a8a5a" /><path d="M2 13c3-5 5-1 7-5s3-2 5-3" stroke="#e07a18" strokeWidth="2" /></>),
      ],
      [
        tile('#f4f4f0', <><path d="M1.500 1.500h4v13h-4z" fill="#8fd01c" stroke="none" /><path d="M1.500 1.500h4v7h-4z" fill="#f2d81c" stroke="none" /><path d="M8 4h5M8 7h5M8 10h5" stroke="#555" /></>),
        <text x="8" y="11" textAnchor="middle" fontSize="7" fontWeight="700" fontStyle="italic" fill="#111" stroke="none" transform="rotate(-20 8 8)">ABC</text>,
      ],
      [
        <><circle cx="6" cy="6" r="5" fill="#aaa" /><circle cx="11" cy="10" r="4.500" fill="#d83a78" stroke="#611" /><circle cx="7" cy="5" r="2" fill="#fff" stroke="none" /></>,
        <><path d="M6.500 1.500h3v5l4 8h-11l4-8z" fill="#f4d7e2" stroke="#822" /><path d="m5 9.500-2.500 5h11l-2.500-5z" fill="#d22a68" stroke="none" /></>,
      ],
    ],
  },
];

function RibbonPanel({ panel }: { panel: Panel }) {
  return (
    <div className={`${panel.width} shrink-0 overflow-hidden rounded-[3px] border border-[#999] bg-[#dcdcdc]`}>
      <div className="flex h-[38px] justify-between divide-x divide-[#c6c6c6]">
        {panel.groups.map((group, g) => (
          <div key={g} className="grid grow grid-flow-col grid-rows-2 justify-evenly">
            {group.map((art, i) => (
              <button key={i} aria-label={`${panel.title} ${g + 1}.${i + 1}`} className="flex h-[19px] w-[18px] items-center justify-center">
                <Art>{art}</Art>
              </button>
            ))}
          </div>
        ))}
      </div>
      <div className="flex h-[9px] items-center justify-between bg-[#1c1c1c] px-px text-[7px] leading-[9px] text-white">
        <span className="grow text-center">{panel.title}</span>
        <span className="text-[#aaa]">+</span>
      </div>
    </div>
  );
}

const cylinder = (top: string, body: string) => (
  <>
    <path d="m2 7 6-5c4 0 6 3 6 6l-6 6c-4 0-6-3-6-7z" fill={body} stroke="#333" strokeWidth="0.8" />
    <path d="m2 7 6-5c2 0 3 1 4 2l-5 5c-2-1-4-2-5-2z" fill={top} stroke="none" />
  </>
);

const caret = <svg viewBox="0 0 6 4" className="h-[3px] w-[5px] shrink-0"><path d="M0 0h6L3 4z" fill="#222" /></svg>;

function Grasshopper() {
  const [tab, setTab] = useState('Prm');

  return (
    <section className="absolute -top-[3px] left-[17px] flex h-[430px] w-[517px] flex-col rounded-t-[5px] rounded-b-[3px] border border-[#4a5a6c] bg-[#b4c8de] px-[5px] pb-[4px] shadow-[0_0_6px_#0008] ring-1 ring-[#e6f2fc] ring-inset">
      <header className="flex h-[19px] shrink-0 items-start bg-linear-to-b from-[#dcebf8] to-[#a9bcd8]">
        <h2 className="grow text-[8px] leading-[18px] text-[#111]">Grasshopper - unnamed</h2>
        <div className="flex h-[12px] rounded-b-[3px] border border-t-0 border-[#8195b0]">
          <button aria-label="Minimize" className="flex w-[21px] items-center justify-center border-r border-[#8195b0]">
            <span className="block h-[3px] w-[8px] border border-[#444] bg-white" />
          </button>
          <button aria-label="Maximize" className="flex w-[18px] items-center justify-center border-r border-[#8195b0]">
            <span className="block size-[7px] border-2 border-[#666] bg-white" />
          </button>
          <button aria-label="Close" className="flex w-[28px] items-center justify-center">
            <svg viewBox="0 0 8 8" className="size-[8px]"><path d="m1 1 6 6M7 1 1 7" stroke="#444" strokeWidth="2.500" /><path d="m1 1 6 6M7 1 1 7" stroke="#fff" strokeWidth="1" /></svg>
          </button>
        </div>
      </header>

      <div className="flex min-h-0 grow flex-col overflow-hidden bg-[#f3f3f3] text-[7px]">
        <nav className="flex h-[14px] shrink-0 items-center gap-[13px] bg-linear-to-r from-[#fdfdfd] to-[#f1f1f1] px-[9px] text-[#111]">
          {['File', 'Edit', 'View', 'Display', 'Solution', 'Help'].map((m) => <button key={m}>{m}</button>)}
          <span className="ml-auto -mr-[4px]">unnamed</span>
        </nav>
        <div role="tablist" className="flex h-[17px] shrink-0 items-end justify-between border-b border-[#bbb] pr-[6px] text-[#666]">
          {GH_TABS.map((t) => (
            <button
              key={t}
              role="tab"
              aria-selected={t === tab}
              onClick={() => setTab(t)}
              className={t === tab ? '-mb-px h-[16px] rounded-t-[4px] border border-b-0 border-[#aaa] bg-white px-[5px] text-[#111]' : 'h-[15px]'}
            >
              {t}
            </button>
          ))}
        </div>
        <div className="flex h-[57px] shrink-0 gap-[2px] bg-linear-to-b from-[#d2d2d2] to-[#f0f0f0] px-px pt-px pb-[7px]">
          {PANELS.map((p) => <RibbonPanel key={p.title} panel={p} />)}
        </div>

        <div className="flex h-[22px] shrink-0 items-center gap-[4px] border-t border-[#777] bg-[#fbfbfb] pr-px pl-[4px]">
          <button aria-label="Open"><Art className="size-[15px]"><path d="M1.500 14.500V3l3-1.500h8L14 3v11.500z" fill="#e9f5d8" stroke="#567a34" /><path d="M1.500 14.500V8l13-2v8.500z" fill="#7cc23a" stroke="#40701a" /></Art></button>
          <button aria-label="Save"><Art className="size-[15px]"><path d="M1 1.500h14v13H1z" fill="#2f68c8" stroke="#12305f" /><path d="M4 1.500h8v5H4zM4 9.500h8v5H4z" fill="#eef" stroke="none" /><path d="M8.500 11h2v3h-2z" fill="#12305f" stroke="none" /></Art></button>
          <span className="flex h-[14px] w-[51px] items-center border-x border-[#ccc] bg-white pr-[4px] pl-[5px]">
            <input aria-label="Zoom" defaultValue="41%" className="min-w-0 grow bg-transparent text-[9px] leading-[12px] text-[#222]" />
            {caret}
          </span>
          <button aria-label="Zoom extents" className="flex items-center gap-[3px]">
            <Art className="size-[14px]"><path d="M1.500 5V1.500H5M11 1.500h3.500V5M14.500 11v3.500H11M5 14.500H1.500V11" stroke="#111" strokeWidth="2.500" /><circle cx="8" cy="8" r="2" fill="#111" /></Art>
            {caret}
          </button>
          <button aria-label="Preview" className="flex items-center gap-[4px]">
            <Art><path d="M.500 8.500C4 3 12 3 15.500 8.500 12 13 4 13 .500 8.500z" fill="#fff" stroke="#234" strokeWidth="1.400" /><circle cx="8" cy="8" r="3.500" fill="#5ba3c4" stroke="#234" /><circle cx="8" cy="8" r="1.500" fill="#111" /></Art>
            {caret}
          </button>
          <button aria-label="Sketch"><Art><path d="M1 12c0-6 4-6 3-3s-1 6 3 3" strokeWidth="1.300" /><path d="m6 12 5-9 4 3-5 7z" fill="#d8322a" stroke="#611" /><path d="m6 12 1-2.500L10 12z" fill="#f2d8a8" stroke="#611" strokeWidth="0.5" /></Art></button>

          <div className="ml-auto flex items-center gap-[3px]">
            <button aria-label="No preview"><Art><ellipse cx="8" cy="11.500" rx="5.500" ry="3" fill="#333" /><path d="m3.500 7 4-4h4l1 5c-2 2-7 2-9-1z" fill="#ddd" stroke="#777" /></Art></button>
            <button aria-label="Wireframe preview"><Art>{cylinder('#eee', '#fff')}<path d="m5 4.500 5 8M8 2l5 8" stroke="#555" /></Art></button>
            <button aria-label="Shaded preview" className="border border-[#8fc0d8] bg-[#e4f3fa] p-px"><Art>{cylinder('#e04a3a', '#a5140c')}</Art></button>
            <span className="mx-[2px] h-[12px] w-px bg-[#ccc]" />
            <button aria-label="Selected preview"><Art>{cylinder('#58a824', '#e8e8e8')}</Art></button>
            <button aria-label="Mesh settings"><Art><circle cx="8" cy="8" r="6.500" fill="#eee" /><path d="M8 1.500a6.500 6.500 0 0 0 0 13z" fill="#f09a2c" stroke="none" /><path d="M8 1.500v13" /></Art></button>
            <span className="h-[12px] w-px bg-[#ccc]" />
            <button aria-label="Document preview" className="flex items-center gap-[2px]"><Art>{ball('#d7ebff', '#5a9be2', 6)}</Art>{caret}</button>
          </div>
        </div>

        <NodeCanvas />

        <footer className="flex h-[16px] shrink-0 items-center justify-between bg-[#f6f6f6] pr-[2px] pl-[4px] text-[#777]">
          <span>...</span>
          <span className="flex items-end gap-[2px]">
            0.9.0056
            <svg viewBox="0 0 8 8" className="size-[8px]"><path d="M6 1h1v1H6zM6 4h1v1H6zM3 4h1v1H3zM6 7h1v1H6zM3 7h1v1H3zM0 7h1v1H0z" fill="#558" /></svg>
          </span>
        </footer>
      </div>
    </section>
  );
}

/* ---------- properties panel ---------- */

type Row = { label: string; value: string; kind?: 'off' | 'select' | 'button' | 'file' | 'check' };

const PROPS: { title: string; rows: Row[] }[] = [
  {
    title: 'Viewport',
    rows: [
      { label: 'Title', value: 'Perspective' },
      { label: 'Width', value: '1568', kind: 'off' },
      { label: 'Height', value: '761', kind: 'off' },
      { label: 'Projection', value: 'Perspective', kind: 'select' },
    ],
  },
  {
    title: 'Camera',
    rows: [
      { label: 'Lens Length', value: '50.0' },
      { label: 'X Location', value: '71.495' },
      { label: 'Y Location', value: '-65.028' },
      { label: 'Z Location', value: '33.266' },
      { label: 'Location', value: 'Place...', kind: 'button' },
    ],
  },
  {
    title: 'Target',
    rows: [
      { label: 'X Target', value: '16.091' },
      { label: 'Y Target', value: '-4.139' },
      { label: 'Z Target', value: '25.484' },
      { label: 'Location', value: 'Place...', kind: 'button' },
    ],
  },
  {
    title: 'Wallpaper',
    rows: [
      { label: 'Filename', value: '(none)', kind: 'file' },
      { label: 'Show', value: '', kind: 'check' },
      { label: 'Gray', value: '', kind: 'check' },
    ],
  },
];

function Field({ row, id }: { row: Row; id: string }) {
  const text = 'block h-[12px] w-full min-w-0 px-[2px]';
  switch (row.kind) {
    case 'button':
      return <button id={id} className="block h-[12px] w-full rounded-[2px] border border-[#777] bg-linear-to-b from-[#f6f6f6] to-[#d0d0d0] leading-[10px]">{row.value}</button>;
    case 'check':
      return <span className="flex h-[12px] items-center pl-[2px]"><CheckBox id={id} checked /></span>;
    case 'select':
      return (
        <span className="relative block">
          <select id={id} className={`${text} appearance-none`} defaultValue={row.value}>
            <option>{row.value}</option>
          </select>
          <span className="pointer-events-none absolute top-0 right-0 flex h-[12px] w-[12px] items-center justify-center border border-[#999] bg-[#e6e6e6]">{caret}</span>
        </span>
      );
    case 'file':
      return (
        <span className="flex">
          <input id={id} className={text} defaultValue={row.value} />
          <button aria-label="Browse" className="h-[12px] w-[13px] shrink-0 rounded-[2px] border border-[#999] bg-[#eee] leading-[8px]">...</button>
        </span>
      );
    default:
      return <input id={id} className={`${text} disabled:bg-[#e2e2e6] disabled:text-[#888]`} disabled={row.kind === 'off'} defaultValue={row.value} />;
  }
}

const SIDE_TABS = [
  { label: 'Prop...', art: <><circle cx="8" cy="8" r="5.500" stroke="#d23a2a" strokeWidth="3" /><path d="M8 2.500a5.500 5.500 0 0 1 5 7.500" stroke="#3a9a3a" strokeWidth="3" /><path d="M3 10.500a5.500 5.500 0 0 0 9 1" stroke="#2a4ad2" strokeWidth="3" /></> },
  { label: 'Laye...', art: <><path d="m1 4 8-2 6 4-5 8-6-3z" fill="#333" /><path d="m1 3 7-2 6 4-6 4z" fill="#e0301c" stroke="#611" /><path d="m6 10 6 0 2-4" stroke="#e8b020" strokeWidth="1.500" /></> },
  { label: 'Displ...', art: <><rect x="1" y="2" width="14" height="9.500" fill="#99a" stroke="#222" strokeWidth="1.800" /><path d="M4 14.500h8" strokeWidth="2" /></> },
  { label: 'Help', art: <><rect x="1" y="1.500" width="14" height="13" rx="1" fill="#5a80d8" stroke="#234" /><rect x="4" y="5" width="8" height="8" fill="#e8eefc" stroke="none" /><path d="M6.500 7.500c1-2 4-1 2.500 1L8 10M8 11.500v.8" stroke="#225" /></> },
];

function PropertiesPanel() {
  return (
    <aside className="ml-[4px] w-[171px] shrink-0 pt-[3px] text-[7px] text-[#222]">
      <div className="flex h-[16px] items-end" role="tablist">
        {SIDE_TABS.map((t, i) => (
          <button
            key={t.label}
            role="tab"
            aria-selected={i === 0}
            className={`flex h-[15px] w-[39px] items-center gap-[2px] rounded-tr-[6px] border border-b-0 border-[#b4b4c4] pl-[2px] ${i === 0 ? 'bg-white' : 'bg-[#dcdcec]'}`}
          >
            <Art className="size-[10px]">{t.art}</Art>
            {t.label}
          </button>
        ))}
        <button aria-label="Panel options" className="ml-auto pr-px"><Gear /></button>
      </div>
      <div className="h-[501px] border border-[#c8c8d0] bg-[#f4f4f7] px-[3px] pt-[5px]">
        <table className="w-full table-fixed border-collapse">
          {PROPS.map((section) => (
            <tbody key={section.title}>
              <tr className="h-[14px]">
                <th colSpan={2} scope="rowgroup" className="p-0 text-left font-normal">{section.title}</th>
              </tr>
              {section.rows.map((row) => {
                const id = `${section.title}-${row.label}`;
                return (
                  <tr key={row.label} className="h-[13px] bg-white">
                    <th scope="row" className="border border-[#e4e4e8] p-0 pl-[7px] text-left leading-[12px] font-normal">
                      <label htmlFor={id} className={row.kind === 'off' ? 'text-[#888]' : ''}>{row.label}</label>
                    </th>
                    <td className="border border-[#e4e4e8] p-0 leading-[12px]"><Field row={row} id={id} /></td>
                  </tr>
                );
              })}
            </tbody>
          ))}
        </table>
      </div>
    </aside>
  );
}

/* ---------- shell ---------- */

const strip = 'ml-[3px] border-l-2 border-[#d6d6da] bg-linear-to-b from-white to-[#e6e6ea]';

const PANELING = [
  { label: 'Location', art: <><circle cx="8" cy="8" r="6.500" fill="#222" /><path d="M4 5c2-3 5-2 5 0s-4 2-3 4-3 1-2-4zM10 8l3-1-1 4z" fill="#ddd" stroke="none" /></> },
  { label: 'Nodes', art: <><path d="m1 12 5-6 2 1-4 6M6 13l5-9M10 13l5-11" stroke="#444" strokeWidth="1.300" /><path d="M4 3h6" stroke="#999" /></> },
  { label: 'Materials', art: <><path d="m3 7 3-5 3 2M7 2l3 3" stroke="#333" strokeWidth="1.400" /><path d="M4 7.500h9v7H4z" fill="#fff" /><path d="M1 5h5v4H1zM6 10h5v3H6z" fill="#d8862a" stroke="#6a3c05" /></> },
  { label: 'Metrics', art: <><path d="m.500 12 4.500-9h10.500l-3.500 9z" fill="#f0b820" stroke="#5a3c05" /><path d="m2 12 3-4 3 1 4-5" stroke="#a0321c" strokeWidth="1.500" /><path d="M-4 16h4v-4z" fill="#555" stroke="none" /></> },
];

const SNAPS: [string, boolean][] = [
  ['End', true], ['Near', true], ['Point', true], ['Mid', true], ['Cen', true], ['Int', true], ['Perp', true],
  ['Tan', false], ['Quad', true], ['Knot', false], ['Vertex', false], ['Project', false], ['Disable', false],
];

const notebook = (dot: ReactNode) => (
  <>
    <path d="M2 1.500h10l2.500 2v11H5L2 12z" fill="#2c2a26" />
    <path d="M5 4h9v10H5z" fill="#cfc8b4" />
    {dot}
  </>
);

export default function App() {
  const [toolTab, setToolTab] = useState('Set View');

  return (
    <div className="flex h-screen min-h-[640px] flex-col overflow-hidden bg-[#e9e9ee] font-['Liberation_Sans',Arial,sans-serif] text-[8px] leading-[10px] text-[#222]">
      {/* Title bar */}
      <header className="flex h-[14px] shrink-0 items-center bg-[#0d1218] bg-linear-to-r from-[#8b8b8b] from-0% via-[#777] via-15% to-[#0d1218] to-18%">
        <svg viewBox="0 0 12 12" className="mr-[2px] ml-px size-[11px]"><rect width="12" height="12" fill="#222" /><path d="m2 2 3 2 3-2 2 3-2 5-4-1-2-3z" fill="#eee" /></svg>
        <h1 className="grow text-[8px] leading-[14px] text-black">Untitled - Undefined (Undefined) (64-bit) - [Perspective]</h1>
        <div className="mr-[2px] flex h-[12px] self-start overflow-hidden rounded-b-[3px] border border-t-0 border-[#aaa]">
          <button aria-label="Minimize" className="flex w-[15px] items-end justify-center border-r border-[#888] bg-linear-to-b from-[#999] to-[#444] pb-[3px]"><span className="block h-[2px] w-[8px] bg-white" /></button>
          <button aria-label="Restore" className="flex w-[15px] items-center justify-center bg-linear-to-b from-[#999] to-[#444]"><span className="block size-[6px] border border-white" /></button>
          <button aria-label="Close" className="flex w-[37px] items-center justify-center bg-linear-to-b from-[#d88a78] to-[#b02a14] font-bold text-white">x</button>
        </div>
      </header>

      {/* Menu bar */}
      <nav className="flex h-[15px] shrink-0 items-center gap-[9px] border-t border-[#aaa] bg-linear-to-b from-[#f6f6fc] to-[#dedeee] px-[5px] text-black">
        {MENUS.map((m) => <button key={m}>{m}</button>)}
      </nav>

      {/* Toolbar tabs and command line */}
      <div className="flex h-[36px] shrink-0">
        <div className="flex w-1/2 shrink-0 flex-col pr-[3px] pl-[5px]">
          <div role="tablist" className="flex h-[13px] shrink-0 items-end border-b border-[#c4c4cc] text-[7px]">
            {TOOL_TABS.map((t) => (
              <button
                key={t}
                role="tab"
                aria-selected={t === toolTab}
                onClick={() => setToolTab(t)}
                className={`h-[11px] rounded-tr-[5px] border border-b-0 border-[#c0c0cc] px-[5px] leading-[10px] ${t === toolTab ? 'bg-white' : 'bg-[#e2e2ee]'}`}
              >
                {t}
              </button>
            ))}
            <button aria-label="Toolbar options" className="mr-[2px] ml-auto"><Gear /></button>
          </div>
          <div className="flex grow items-center justify-between pb-[3px]">
            {SET_VIEW.map((tool, i) => tool
              ? <ToolButton key={i} tool={tool} />
              : <span key={i} className="h-[15px] w-px bg-[#bbb]" />)}
          </div>
        </div>
        <div className="my-px ml-[2px] flex min-w-0 flex-1 border border-[#bcbcc4] bg-white text-[#222]">
          <div className="min-w-0 flex-1 overflow-hidden pl-[2px] whitespace-nowrap">
            <p>Drag objects, tap Alt to make a duplicate, press and hold Alt to temporarily toggle osnaps:</p>
            <p>{'Surface closed: 0 u, 0 vn'.repeat(7)}</p>
            <p className="flex border-t border-[#ccc]">
              <label htmlFor="command" className="font-bold">Command:</label>
              <input id="command" className="ml-[3px] h-[10px] grow border-l border-[#333]" />
            </p>
          </div>
          <div className="flex w-[11px] shrink-0 flex-col items-center justify-around bg-[#f0f0f0]">
            <svg viewBox="0 0 6 4" className="h-[3px] w-[5px]"><path d="M0 4h6L3 0z" fill="#444" /></svg>
            {caret}
            <span className="flex h-[10px] w-full flex-col items-center justify-around border border-[#bbb]">
              <svg viewBox="0 0 6 4" className="h-[2px] w-[4px]"><path d="M0 4h6L3 0z" fill="#444" /></svg>
              <svg viewBox="0 0 6 4" className="h-[2px] w-[4px]"><path d="M0 0h6L3 4z" fill="#444" /></svg>
            </span>
          </div>
        </div>
      </div>

      {/* Toolbar strips */}
      <div className="flex shrink-0 flex-col gap-[2px] pt-px">
        <div className={`${strip} h-[22px]`}>
          <div className="flex h-[20px] w-[149px] items-center justify-between pl-px">
            {SHAPES.map((t) => <ToolButton key={t.name} tool={t} />)}
          </div>
        </div>
        <div className="flex gap-[2px]">
          <div className={`${strip} flex h-[23px] w-[670px] items-center gap-[8px] pb-[2px] pl-px text-[7px]`}>
            {PANELING.map((p) => (
              <button key={p.label} className="flex items-center gap-[3px]">
                <Art>{p.art}</Art>
                {p.label}
              </button>
            ))}
          </div>
          <div className={`${strip} flex h-[23px] grow items-center gap-[3px] pb-[2px] pl-px`}>
            <ToolButton tool={{ name: 'Blue book', art: notebook(<circle cx="10" cy="9" r="3.500" fill="#3a78b8" />) }} />
            <ToolButton tool={{ name: 'Red book', art: notebook(<circle cx="10" cy="9" r="3.500" fill="#b83a3a" />) }} />
            <ToolButton tool={{ name: 'List book', art: notebook(<path d="M6 6.500h7M6 9h7M6 11.500h7" />) }} />
          </div>
        </div>
        <div className={`${strip} h-[23px]`}>
          <div className="flex h-[20px] w-[186px] items-center justify-between pl-px">
            {VRAY.map((t) => <ToolButton key={t.name} tool={t} />)}
          </div>
        </div>
        <div className={`${strip} h-[22px]`}>
          <div className="flex h-[18px] w-[147px] items-center justify-between">
            {LIGHTS.map((t) => <ToolButton key={t.name} tool={t} />)}
          </div>
        </div>
      </div>

      {/* Work area */}
      <main className="flex min-h-0 grow pt-[3px]">
        <div className="w-[57px] shrink-0">
          <div className="mt-[2px] ml-[2px] w-[52px] border-t border-[#c4c4cc]" />
          <div className="mt-[2px] grid h-[337px] w-[38px] auto-rows-fr grid-cols-2 items-center justify-items-center">
            {PALETTE.map((t) => (
              <button key={t.name} aria-label={t.name} className="flex items-center justify-center">
                <Art fly={t.fly} className="size-[14px]">{t.art}</Art>
              </button>
            ))}
          </div>
        </div>

        <div className="flex min-w-0 grow flex-col">
          <div className="relative min-h-0 grow">
            <Scene />
            <button aria-label="Perspective" className="absolute top-0 left-0 bg-[#7f93a8] pr-px pl-[6px] leading-[12px] text-black">Per</button>
            <Grasshopper />
          </div>
          <div role="tablist" className="flex h-[17px] shrink-0 gap-[2px]">
            {['Perspective', 'Top', 'Front', 'Right'].map((t, i) => (
              <button
                key={t}
                role="tab"
                aria-selected={i === 0}
                className={`h-[14px] rounded-bl-[5px] border border-t-0 border-[#c0c0cc] px-[5px] ${i === 0 ? 'bg-white' : 'bg-[#dfdfee]'}`}
              >
                {t}
              </button>
            ))}
            <button aria-label="New viewport" className="flex h-[14px] w-[18px] items-center justify-center rounded-bl-[5px] border border-t-0 border-[#c0c0cc]">
              <svg viewBox="0 0 8 8" className="size-[8px]"><path d="M3 0h2v3h3v2H5v3H3V5H0V3h3z" fill="#fff" stroke="#777" strokeWidth="0.8" /></svg>
            </button>
          </div>
        </div>

        <PropertiesPanel />
      </main>

      {/* Object snaps */}
      <div className="ml-[3px] flex h-[17px] shrink-0 items-center gap-[5px] border-l-2 border-[#ccc] pl-[3px] text-[7px]">
        {SNAPS.map(([label, on]) => (
          <span key={label} className="flex items-center gap-[3px]">
            <CheckBox id={`snap-${label}`} checked={on} />
            <label htmlFor={`snap-${label}`}>{label}</label>
          </span>
        ))}
      </div>

      {/* Status bar */}
      <footer className="flex h-[13px] shrink-0 divide-x divide-[#bcbcc4] border-t border-[#c4c4cc] leading-[12px]">
        <button className="w-[38px] text-center">CPlane</button>
        <span className="w-[59px] text-center">x -84.403</span>
        <span className="w-[59px] text-center">y 130.850</span>
        <span className="w-[58px] text-center">z 0.000</span>
        <button className="w-[58px] text-center">Feet</button>
        <button className="flex w-[116px] items-center gap-[2px] pl-[2px]"><span className="block size-[9px] bg-black" />Default</button>
        <button className="w-[50px]">Grid Snap</button>
        {['Ortho', 'Planar', 'Osnap', 'SmartTrack'].map((t) => <button key={t} className="bg-[#e2eefa] px-[5px] font-bold text-black">{t}</button>)}
        <button className="px-[8px]">Gumball</button>
        <button className="px-[9px]">Record History</button>
        <button className="px-[6px]">Filter</button>
        <span className="px-[4px]">CPU use: 3.9 %</span>
      </footer>
    </div>
  );
}
